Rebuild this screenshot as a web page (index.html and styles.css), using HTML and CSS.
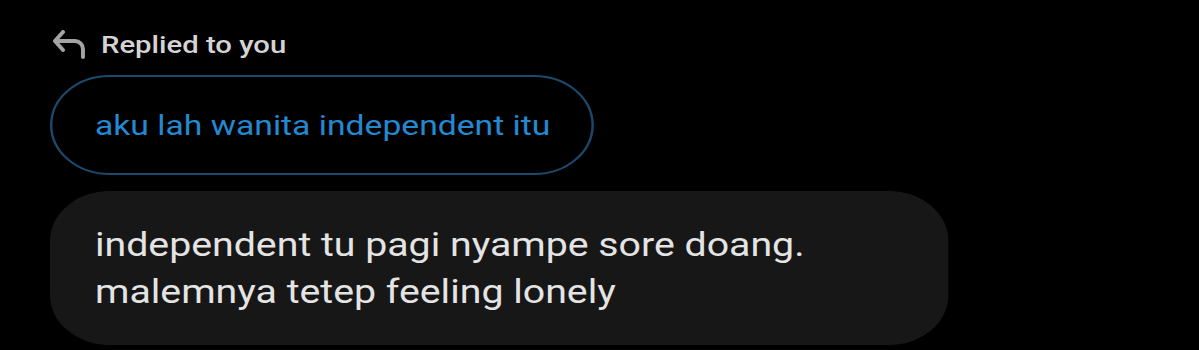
FILE: index.html
```html
<!DOCTYPE html>
<html>
<head>
<meta charset="utf-8">
<link rel="stylesheet" href="styles.css">
</head>
<body>
<div class="stage">
  <div class="thread">
    <div class="replied">
      <svg class="reply-icon" viewBox="0 0 40 36" preserveAspectRatio="none">
        <path d="M13 6 L5 15 L13 24 M5.5 15 H25 A8 8 0 0 1 33 23 V31" fill="none" stroke="#a3a3a3" stroke-width="4" stroke-linecap="round" stroke-linejoin="round"/>
      </svg>
      <span class="replied-text">Replied to you</span>
    </div>
    <div class="quote">aku lah wanita independent itu</div>
    <div class="bubble">independent tu pagi nyampe sore doang.<br>malemnya tetep feeling lonely</div>
  </div>
</div>
</body>
</html>
```
FILE: styles.css
```css
html, body {
  margin: 0;
  padding: 0;
  background: #000;
}
body {
  width: 1199px;
  height: 350px;
  overflow: hidden;
  font-family: Roboto, "Noto Sans", sans-serif;
}
/* the source screenshot is stretched horizontally by ~1.19 */
.stage {
  width: 1008px;
  transform: scaleX(1.19);
  transform-origin: 0 0;
}
.thread {
  display: flex;
  flex-direction: column;
  align-items: flex-start;
  padding: 26px 0 0 42px;
}
.replied {
  display: flex;
  align-items: center;
  gap: 9.3px;
  height: 36px;
}
.reply-icon {
  display: block;
  width: 33.6px;
  height: 36px;
}
.replied-text {
  color: #d4d4d4;
  font-size: 24.6px;
  font-weight: 500;
}
.quote {
  margin-top: 13px;
  box-sizing: border-box;
  height: 100px;
  display: flex;
  align-items: center;
  padding: 0 35px 0 35.8px;
  border: 2px solid #1b4a6e;
  border-radius: 50px;
  color: #2389d2;
  font-size: 28.3px;
}
.bubble {
  margin-top: 16px;
  box-sizing: border-box;
  width: 754.6px;
  height: 154px;
  padding: 30px 37.8px 0 37.8px;
  background: #171717;
  border-radius: 50px;
  color: #e4e4e4;
  font-size: 33px;
  line-height: 47px;
}
```
